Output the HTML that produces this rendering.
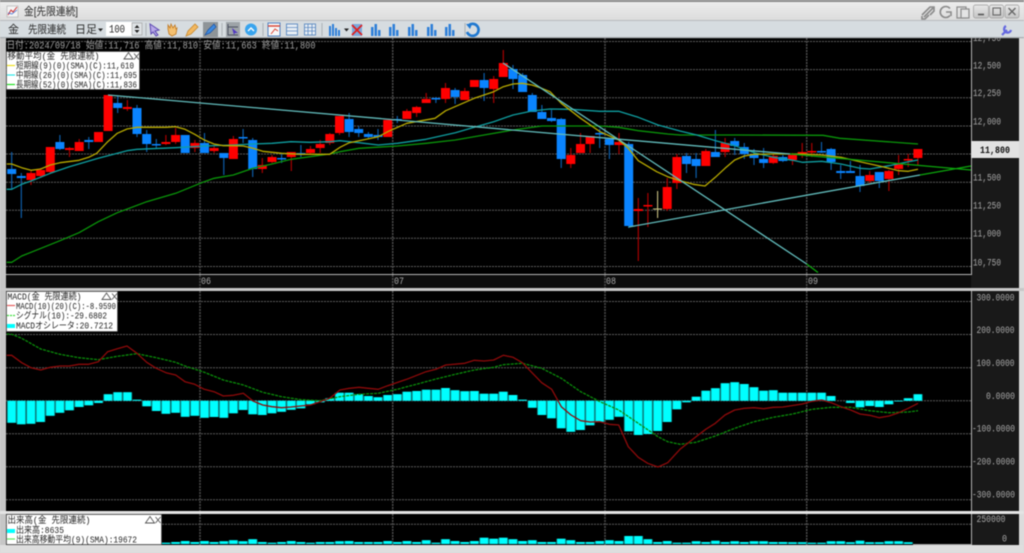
<!DOCTYPE html>
<html lang="ja"><head><meta charset="utf-8"><title>金[先限連続]</title>
<style>
html,body{margin:0;padding:0;width:1024px;height:553px;overflow:hidden;background:#d8d8d8}
svg{display:block;filter:blur(.4px)}
.m{font-family:"Liberation Mono","Noto Sans CJK JP",monospace;font-size:10px}
.s{font-family:"Liberation Sans","Noto Sans CJK JP",sans-serif;font-size:11px;fill:#2a2a2a}
.ax{fill:#a8a8a8}
.lg{fill:#222;font-size:9px}
.g{stroke:#5c5c5c;stroke-width:1;stroke-dasharray:2 1;fill:none}
.v{stroke:#4e4e4e;stroke-width:1.5;stroke-dasharray:2 1;fill:none}
.l{fill:none;stroke-linejoin:round;stroke-width:1.3}
</style></head><body>
<svg xmlns="http://www.w3.org/2000/svg" width="1024" height="553" viewBox="0 0 1024 553">
<defs><linearGradient id="tb" x1="0" y1="0" x2="0" y2="1"><stop offset="0" stop-color="#efefef"/><stop offset="1" stop-color="#dcdcdc"/></linearGradient>
<linearGradient id="bt" x1="0" y1="0" x2="0" y2="1"><stop offset="0" stop-color="#e8e8e8"/><stop offset="1" stop-color="#c4c4c4"/></linearGradient></defs>
<rect width="1024" height="553" fill="#d8d8d8"/>
<rect x="0" y="38" width="6" height="510" fill="#c6c6c6"/>
<rect x="1019" y="38" width="5" height="510" fill="#dcdcdc"/>

<!-- panels -->
<rect x="6" y="38" width="1013" height="250" fill="#000"/>
<rect x="6" y="274" width="965" height="14" fill="#0c0c0c"/>
<rect x="971" y="38" width="48" height="250" fill="#191919"/>
<rect x="6" y="291" width="965" height="220" fill="#000"/>
<rect x="971" y="291" width="48" height="220" fill="#191919"/>
<rect x="6" y="514" width="965" height="31" fill="#000"/>
<rect x="971" y="514" width="48" height="31" fill="#191919"/>
<rect x="0" y="288" width="1024" height="3" fill="#c8c8c8"/>
<rect x="0" y="511" width="1024" height="3" fill="#e4e4e4"/>
<rect x="0" y="545" width="1024" height="8" fill="#dedede"/>
<path d="M6 274.5H971.5V38M971.5 291V511M971.5 514V545" fill="none" stroke="#b4b4b4" stroke-width="1"/>

<!-- grid -->
<path class="g" d="M6 41.5H971M6 69.6H971M6 97.7H971M6 126H971M6 154H971M6 182.3H971M6 210.3H971M6 238.3H971M6 266.5H971"/>
<path class="v" d="M200 38V288M392.7 38V288M605 38V288M806.7 38V288"/>
<path class="g" d="M6 301.5H971M6 334.5H971M6 367.7H971M6 400.7H971M6 433.7H971M6 466.7H971M6 499.7H971"/>
<path class="v" d="M200 291V511M392.7 291V511M605 291V511M806.7 291V511"/>
<path class="g" d="M6 524.3H971"/>
<path class="v" d="M200 514V545M392.7 514V545M605 514V545M806.7 514V545"/>

<!-- candles -->
<path fill="none" stroke="#a80000" stroke-width="1.2" d="M31 171V185M40.6 168V178M50.3 147V174M69.5 147V157M79.2 139V151M98.5 132V142M127.4 100V111M165.9 135V145M175.6 128V144M194.9 140V152M214.1 145V153M233.4 136V159M262.3 158V173M272 155V163M291.3 152V171M310.5 146V154M320.2 140V153M329.8 133V145M339.5 116V135M406.9 109V119M416.6 106V117M426.2 93V103M445.5 83V103M464.8 88V100M474.4 80V87M493.7 76V103M503.3 50V77M570.8 148V168M580.5 133V153M590.1 136V153M619 133V154M638.3 198V261M647.9 193V227M667.2 178V211M676.9 154V189M705.8 149V166M725.1 138V157M773.3 154V164M792.5 153V165M802.2 143V158M811.8 143V157M869.7 171V183M888.9 170V191M898.6 155V175M908.2 154V167M917.9 149V165"/>
<path fill="none" stroke="#0c5ca8" stroke-width="1.2" d="M11.7 152V189M21.3 173V218M59.9 135V150M88.8 137V149M117.7 96V113M137 105V137M146.7 130V152M156.3 139V149M204.5 133V153M223.8 153V175M243.1 129V143M252.7 138V177M281.6 153V163M300.9 145V157M349.1 113V137M358.7 126V137M368.4 132V139M378 129V140M397.3 116V123M435.9 97V103M455.1 88V104M484.1 73V101M513 65V89M522.6 73V92M532.3 93V112M541.9 105V119M551.5 110V122M561.2 118V168M599.7 129V148M609.4 139V159M628.7 142V228M686.5 153V173M696.1 153V178M715.4 130V157M734.7 138V155M744.3 143V159M754 149V165M763.6 148V168M782.9 155V162M821.5 142V153M831.1 148V170M840.7 165V179M850.4 161V173M860 165V192M879.3 172V188"/>
<path fill="none" stroke="#c8c080" stroke-width="1.1" d="M657.6 191V218M653 209H662"/>
<path fill="none" stroke="#f00" stroke-width="9" d="M31 173V180M40.6 170V176M50.3 147V172M69.5 148V150M79.2 142V151M98.5 132V142M108.1 95V131M127.4 107V109M165.9 142V144M175.6 135V142M194.9 143V148M214.1 148V151M233.4 139V159M262.3 165V169M272 157V162M291.3 152V157M310.5 149V153M320.2 144V148M329.8 134V143M339.5 116V133M387.7 120V137M406.9 111V119M416.6 107V113M426.2 99V103M445.5 88V99M464.8 91V100M474.4 80V87M493.7 79V89M503.3 63V77M570.8 155V164M580.5 144V153M590.1 136V144M619 142V145M638.3 209V211M647.9 205V206.5M667.2 187V209M676.9 157V183M705.8 151V166M725.1 143V152M773.3 156V163M792.5 155V160M802.2 152V153.5M811.8 151V152.5M869.7 175V181M888.9 171V179M898.6 164V169M908.2 159V160.5M917.9 149V158"/>
<path fill="none" stroke="#0a84ff" stroke-width="9" d="M11.7 169V174M21.3 176V178M59.9 142V149M88.8 140V142M117.7 103V108M137 108V134M146.7 134V144M156.3 144V145.5M185.2 135V153M204.5 143V153M223.8 153V158M243.1 137V138.5M252.7 140V169M281.6 158V159.5M300.9 153V155M349.1 119V132M358.7 129V133M368.4 134V137M378 135V137M397.3 119V120.5M435.9 98V99.5M455.1 90V97M484.1 80V88M513 69V79M522.6 75V92M532.3 95V112M541.9 112V119M551.5 118V121M561.2 119V159M599.7 133V134.5M609.4 139V145M628.7 144V226M686.5 156V164M696.1 159V166M715.4 152V157M734.7 141V146M744.3 147V154M754 154V158M763.6 159V163M782.9 157V161M821.5 151V152.5M831.1 149V162M840.7 171V173M850.4 171V173M860 176V186M879.3 172V181"/>

<!-- moving averages -->
<polyline class="l" stroke="#0a950a" points="6.7,262.3 11.7,262.3 21.7,256 31,252.3 60,240.7 79,232.7 98.3,221.7 117.3,212.7 146.7,201.7 175.7,193.3 204.3,181.7 214,178.3 233.3,175 253,168.3 272,164 291,159.3 329.7,154 340,151.7 359,148.3 397.3,146 426,143.3 455.3,140 484,135 513,130 541.7,126 600,126 618.7,127.3 638.3,130.7 667.7,134 680,135 738.3,135 823,135.3 840,138.3 918,144"/>
<polyline class="l" stroke="#0f9ea0" points="6.7,189.3 11.7,189.3 21.7,184.3 31,181 50.3,173.3 69.3,166.7 98.3,158.3 127,150.7 137,149.3 175.7,147.7 204.3,146 233.3,145 253,144 272,143.3 291,141.7 310.3,142.3 329.7,141.7 340,140.7 359,142.7 378.3,145 397.3,143.3 426,139.3 455.3,132.7 474.3,127.3 493.7,121.7 513,115 532,111 550,109 571,109.3 600,111.3 618.7,111.3 638.3,117.3 658,125 680,131 696.7,135 715.7,140.7 734.7,145.7 754,152.7 773.3,157.3 792.7,160.3 802.3,162.3 821.7,161.3 841,164 860,168.3 870,169 889,165.7 908.3,161.7 918,160"/>
<polyline class="l" stroke="#b8aa00" points="6.7,164 11.7,164 21.7,167.7 31,170.3 40.7,169 50.3,165 60,162.7 79,160.3 88.7,157.3 96.7,153.3 107.7,141.7 117.3,133.3 127,129 137,127.3 166,127.3 175.7,126.7 185,129.3 194.7,134.3 204.3,140 214,144 223.3,145.7 233.3,145.7 243.3,146 253,148.3 262.7,151.3 281.7,153.3 301,154.3 329.7,154.3 340,147.3 349.3,142.7 378.3,136.7 387.7,131.7 406.7,123.3 435,118.3 445.7,110.7 474.3,98.3 493.7,91.7 503.3,86.7 513,84 522.3,83.3 532,85 541.7,88.3 550,91.7 561.3,103.3 580.7,118.3 600,131.7 618.7,140 628.3,148.3 638.3,160.7 656.7,171.7 667.7,176.7 680,180.7 693.3,184.3 705,186 715.3,177.3 725,168.3 734.7,160 744.3,156 754,154.3 773.3,154 802.3,154 821.7,155 841,157.3 860,161.7 879.3,166 898.7,170.7 908.3,171.3 918,169.3"/>

<!-- trend lines -->
<path class="l" stroke="#62bcbc" d="M108 95L790 154M503 63L806.7 264M628.7 227L920 175"/>
<path class="l" stroke="#0ca50c" d="M790 154L971 170M806.7 264L818 272.5M920 175L971 166"/>

<!-- price axis -->
<g class="m ax">
<text x="973" y="41" textLength="28" lengthAdjust="spacingAndGlyphs">12,750</text>
<text x="973" y="68.500" textLength="28" lengthAdjust="spacingAndGlyphs">12,500</text>
<text x="973" y="96" textLength="28" lengthAdjust="spacingAndGlyphs">12,250</text>
<text x="973" y="124.500" textLength="28" lengthAdjust="spacingAndGlyphs">12,000</text>
<text x="973" y="180.500" textLength="28" lengthAdjust="spacingAndGlyphs">11,500</text>
<text x="973" y="208.500" textLength="28" lengthAdjust="spacingAndGlyphs">11,250</text>
<text x="973" y="236.500" textLength="28" lengthAdjust="spacingAndGlyphs">11,000</text>
<text x="973" y="265.500" textLength="28" lengthAdjust="spacingAndGlyphs">10,750</text>
<text x="201" y="284" textLength="10" lengthAdjust="spacingAndGlyphs">06</text>
<text x="394" y="284" textLength="10" lengthAdjust="spacingAndGlyphs">07</text>
<text x="606" y="284" textLength="10" lengthAdjust="spacingAndGlyphs">08</text>
<text x="808" y="284" textLength="10" lengthAdjust="spacingAndGlyphs">09</text>
</g>
<rect x="971" y="141" width="48" height="17" fill="#e2e2e2"/>
<text class="m" x="980" y="153" font-weight="bold" fill="#111" textLength="30" lengthAdjust="spacingAndGlyphs">11,800</text>

<!-- MACD bars -->
<g stroke="#0b8080" stroke-width="9.6" fill="none"><path id="mb" d="M11.7 400.7V422.7M21.3 400.7V424.3M31 400.7V423.7M40.6 400.7V422M50.3 400.7V415.7M59.9 400.7V412.7M69.5 400.7V410.3M79.2 400.7V407M88.8 400.7V405.3M98.5 400.7V403M108.1 400.7V394.3M117.7 400.7V392.3M127.4 400.7V392.3M137 400.7V399.7M146.7 400.7V406.3M156.3 400.7V411M165.9 400.7V413.7M175.6 400.7V412.7M185.2 400.7V416.7M194.9 400.7V415.7M204.5 400.7V417.7M214.1 400.7V417M223.8 400.7V417.7M233.4 400.7V413.3M243.1 400.7V410M252.7 400.7V414.3M262.3 400.7V415M272 400.7V413.3M281.6 400.7V411.7M291.3 400.7V409.7M300.9 400.7V408.3M310.5 400.7V404.3M320.2 400.7V402.3M329.8 400.7V398.3M339.5 400.7V392.7M349.1 400.7V392.7M358.7 400.7V394M368.4 400.7V396M378 400.7V397.3M387.7 400.7V395M397.3 400.7V394.3M406.9 400.7V391.7M416.6 400.7V391M426.2 400.7V389.7M435.9 400.7V389.7M445.5 400.7V388M455.1 400.7V390.3M464.8 400.7V391.3M474.4 400.7V391M484.1 400.7V393.7M493.7 400.7V393.7M503.3 400.7V391.7M513 400.7V395M522.6 400.7V399.7M532.3 400.7V407.7M541.9 400.7V415M551.5 400.7V418.3M561.2 400.7V428.3M570.8 400.7V431.7M580.5 400.7V430M590.1 400.7V425.3M599.7 400.7V421.7M609.4 400.7V419.7M619 400.7V416.7M628.7 400.7V431.3M638.3 400.7V435M647.9 400.7V434M657.6 400.7V431M667.2 400.7V422M676.9 400.7V409.3M686.5 400.7V402.3M696.1 400.7V396.7M705.8 400.7V390.7M715.4 400.7V388.3M725.1 400.7V383.3M734.7 400.7V382.3M744.3 400.7V384M754 400.7V387.3M763.6 400.7V390.7M773.3 400.7V390.3M782.9 400.7V392.7M792.5 400.7V392.7M802.2 400.7V392.7M811.8 400.7V392.7M821.5 400.7V392.7M831.1 400.7V396M850.4 400.7V403M860 400.7V407.3M869.7 400.7V406M879.3 400.7V407M888.9 400.7V404.3M898.6 400.7V401.5M908.2 400.7V398.3M917.9 400.7V394.3"/></g>
<use href="#mb" stroke="#00ffff" stroke-width="8" fill="none"/>

<polyline class="l" stroke="#0a8c0a" stroke-dasharray="3 1" points="6.7,334 11.7,334.3 21.7,338.3 40.7,349 60,354.3 79,357.7 98.3,359.7 117.3,356.3 137,353.7 156.3,357.7 175.7,362.3 185,366 204.3,372.3 223.3,380 243.3,385 262.7,392.3 281.7,396.7 301,399.7 320,400.7 340,396.7 359,394.3 378.3,393.3 397.3,389.3 416.3,384.3 436,379 455.3,374.3 474.3,370 493.7,367.3 503.3,364.7 522.3,363.3 541.7,368.3 561.3,378.3 580.7,391.7 600,401.7 618.7,410 638.3,423.3 658,436.7 667.7,441.7 680,444.3 696,442.3 715.3,436 734.7,428.3 754,421.7 773.3,417.3 792.7,414 812,409.3 831.3,407.3 850.7,407.3 869.7,410.7 889,412.7 908.3,412 918,410.7"/>
<polyline class="l" stroke="#8e0a0a" points="6.7,355.3 11.7,355.3 21.7,362.7 31,367.7 40.7,370 50.3,367.3 60,366 69.3,366 79,364.3 88.7,364.3 98.3,361.7 107.7,351.7 117.3,348.7 127,346 137,353.3 146.7,362.3 156.3,368.3 166,372.7 175.7,375 185,381.7 194.7,384.3 204.3,389.3 214,391.7 223.3,396 233.3,395.3 243.3,393.3 253,401 262.7,405 272,406.7 281.7,407.7 291,407 310.3,405 320,401.7 329.7,398.3 340,390 349.3,388.3 359,387.3 368.3,388.3 378.3,389.3 387.7,385.7 406.7,379.3 426,371.7 436,369.3 445.7,365 464.7,363.3 474.3,360.3 484,361 493.7,360 503.3,355.3 513,357.3 522.3,362.7 532,372.7 541.7,382.7 551.7,389.3 561.3,406.7 571,415 580.7,420.7 590.3,422 600,421.7 609.3,424.3 618.7,425 628.3,446.7 638.3,457.3 647.7,463.3 658,467 667.7,462.7 680,449.3 696,436.7 705.7,429.3 715.3,423.3 725,415 734.7,410 744.3,408.3 754,407.7 763.7,408.7 773.3,407.3 783,407 802.3,404 812,401.3 821.7,400 831.3,402.7 841,406.7 850.7,410 860,414 869.7,415.3 879.3,417.7 889,416 898.7,412.7 908.3,408.3 918,403.3"/>

<g class="m ax">
<text x="976.500" y="300.500" textLength="38" lengthAdjust="spacingAndGlyphs">300.0000</text>
<text x="976.500" y="333" textLength="38" lengthAdjust="spacingAndGlyphs">200.0000</text>
<text x="976.500" y="366" textLength="38" lengthAdjust="spacingAndGlyphs">100.0000</text>
<text x="986" y="399" textLength="29" lengthAdjust="spacingAndGlyphs">0.0000</text>
<text x="972" y="431.500" textLength="43" lengthAdjust="spacingAndGlyphs">-100.0000</text>
<text x="972" y="464.500" textLength="43" lengthAdjust="spacingAndGlyphs">-200.0000</text>
<text x="972" y="497.500" textLength="43" lengthAdjust="spacingAndGlyphs">-300.0000</text>
<text x="976.500" y="522" textLength="29" lengthAdjust="spacingAndGlyphs">250000</text>
<text x="1002" y="541.500" textLength="5" lengthAdjust="spacingAndGlyphs">0</text>
</g>

<!-- volume -->
<g stroke="#0b8080" stroke-width="9.6" fill="none"><path id="vb" d="M165.9 544V542.7M175.6 544V542M185.2 544V541M194.9 544V542M204.5 544V541M214.1 544V542M223.8 544V541.3M233.4 544V540.3M243.1 544V541.3M252.7 544V539.3M262.3 544V542M272 544V542.7M281.6 544V542M291.3 544V541M300.9 544V542M310.5 544V542.7M320.2 544V542M329.8 544V542M339.5 544V541.3M349.1 544V541M358.7 544V542M368.4 544V542M378 544V542M387.7 544V541M397.3 544V542M406.9 544V541M416.6 544V542M426.2 544V540.3M435.9 544V542.7M445.5 544V539.3M455.1 544V541M464.8 544V542M474.4 544V541M484.1 544V537.7M493.7 544V538.7M503.3 544V537.7M513 544V539.3M522.6 544V541M532.3 544V540.3M541.9 544V542M551.5 544V542M561.2 544V538.7M570.8 544V540.3M580.5 544V542M590.1 544V542M599.7 544V541M609.4 544V540.3M619 544V541M628.7 544V536M638.3 544V536M647.9 544V539.3M657.6 544V542M667.2 544V541M676.9 544V542.7M686.5 544V542.7M696.1 544V541.3M705.8 544V542M715.4 544V540.7M725.1 544V542M734.7 544V541.3M744.3 544V542M754 544V541.3M763.6 544V541.3M773.3 544V542M782.9 544V542M792.5 544V542.3M802.2 544V542.3M811.8 544V542.7M821.5 544V542.7M831.1 544V541.3M840.7 544V541.3M850.4 544V542.3M860 544V540.7M869.7 544V542.3M879.3 544V542.3M888.9 544V541.3M898.6 544V541.3M908.2 544V542.3"/></g>
<use href="#vb" stroke="#00ffff" stroke-width="8" fill="none"/>
<path d="M913 544.5H971" stroke="#a0a0a0" stroke-width="1"/>

<!-- info line -->
<text class="m" x="6.500" y="48.500" fill="#a0a0a0" textLength="309" lengthAdjust="spacingAndGlyphs">日付:2024/09/18 始値:11,716 高値:11,810 安値:11,663 終値:11,800</text>

<!-- legend 1 -->
<rect x="6.500" y="51.500" width="133" height="38" fill="#fff" stroke="#444" stroke-width=".6"/>
<g class="m lg">
<text x="7.500" y="59" textLength="92" lengthAdjust="spacingAndGlyphs">移動平均(金 先限連続)</text>
<text x="16" y="68.700" textLength="118" lengthAdjust="spacingAndGlyphs">短期線(9)(0)(SMA)(C):11,610</text>
<text x="16" y="78" textLength="121" lengthAdjust="spacingAndGlyphs">中期線(26)(0)(SMA)(C):11,695</text>
<text x="16" y="87.700" textLength="121" lengthAdjust="spacingAndGlyphs">長期線(52)(0)(SMA)(C):11,836</text>
</g>
<path d="M7 65.500H15" stroke="#f0e020" stroke-width="1.2"/><path d="M7 75H15" stroke="#30e8e8" stroke-width="1.2"/><path d="M7 84.500H15" stroke="#20e020" stroke-width="1.2"/>
<path d="M124 59L128.500 52.500L133 59Z M134 53.500L139 59.500M139 53.500L134 59.500" fill="none" stroke="#555" stroke-width=".9"/>

<!-- legend 2 -->
<rect x="6.500" y="291.500" width="111" height="40" fill="#fff" stroke="#444" stroke-width=".6"/>
<g class="m lg">
<text x="7.500" y="299.700" textLength="74" lengthAdjust="spacingAndGlyphs">MACD(金 先限連続)</text>
<text x="16" y="309" textLength="100" lengthAdjust="spacingAndGlyphs">MACD(10)(20)(C):-8.9590</text>
<text x="16" y="318.700" textLength="91" lengthAdjust="spacingAndGlyphs">シグナル(10):-29.6802</text>
<text x="16" y="328.700" textLength="97" lengthAdjust="spacingAndGlyphs">MACDオシレータ:20.7212</text>
</g>
<path d="M7 305.500H15" stroke="#e86060" stroke-width="1.2"/><path d="M7 315.500H15" stroke="#40e040" stroke-width="1.2" stroke-dasharray="2 1"/><rect x="7" y="324" width="8" height="4" fill="#00ffff"/>
<path d="M102 299.500L106.500 293L111 299.500Z M112 293.500L117 299.500M117 293.500L112 299.500" fill="none" stroke="#555" stroke-width=".9"/>

<!-- legend 3 -->
<rect x="6.500" y="514.500" width="155" height="30" fill="#fff" stroke="#444" stroke-width=".6"/>
<g class="m lg">
<text x="7.500" y="523" textLength="83" lengthAdjust="spacingAndGlyphs">出来高(金 先限連続)</text>
<text x="16" y="533" textLength="48" lengthAdjust="spacingAndGlyphs">出来高:8635</text>
<text x="16" y="542.300" textLength="121" lengthAdjust="spacingAndGlyphs">出来高移動平均(9)(SMA):19672</text>
</g>
<rect x="7" y="529" width="8" height="4" fill="#00ffff"/><path d="M7 539H15" stroke="#60e860" stroke-width="1.2"/>
<path d="M145.500 523L150 516.500L154.500 523Z M155.500 517L160.500 523M160.500 517L155.500 523" fill="none" stroke="#555" stroke-width=".9"/>

<!-- title bar -->
<rect x="0" y="0" width="1024" height="20" fill="url(#tb)"/>
<rect x="0" y="0" width="1024" height="2" fill="#8c8c8c"/>
<rect x="0" y="20" width="1024" height="18" fill="#d6dce0"/>
<rect x="0" y="20" width="1024" height="1" fill="#b8bcc0"/>
<rect x="0" y="37" width="1024" height="1.200" fill="#a8acb0"/>
<rect x="7" y="6" width="11" height="11" fill="#f4f4f4" stroke="#aaa" stroke-width=".6"/>
<path d="M8 15L11 10L13 12L17 7" fill="none" stroke="#d03030" stroke-width="1"/><path d="M8 13L12 14L17 10" fill="none" stroke="#3060d0" stroke-width=".7"/>
<text class="s" x="24" y="15" textLength="54" lengthAdjust="spacingAndGlyphs">金[先限連続]</text>

<!-- title right icons -->
<g fill="none" stroke="#8a8a8a" stroke-width="1.600">
<path d="M924 17L933 8M926 11L930 7L934 7L934 11L930 15M922 15L926 11M929 15L925 19L922 19L922 16"/>
<path d="M950 8.500A5.500 5.500 0 1 0 950 15.500M946 12H951V16"/>
<rect x="957" y="7" width="9" height="11" stroke-width="1.200"/><rect x="961" y="9" width="8" height="9" fill="#e4e4e4" stroke-width="1.200"/>
</g>
<g stroke="#9a9a9a" stroke-width=".7" fill="url(#bt)">
<rect x="973.500" y="5" width="15" height="13" rx="2"/><rect x="989.500" y="5" width="14" height="13" rx="2"/><rect x="1005" y="5" width="14" height="13" rx="2"/>
</g>
<path d="M978 14.500H984" stroke="#555" stroke-width="1.600"/>
<rect x="993" y="8" width="7.500" height="7" fill="none" stroke="#666" stroke-width="1.100"/>
<path d="M1008.500 8L1015.500 15M1015.500 8L1008.500 15" stroke="#666" stroke-width="1.400"/>

<!-- toolbar text -->
<text class="s" x="8" y="33">金</text>
<text class="s" x="28" y="33" textLength="38" lengthAdjust="spacingAndGlyphs">先限連続</text>
<text class="s" x="75" y="33" textLength="22" lengthAdjust="spacingAndGlyphs">日足</text>
<path d="M98 28.500H103L100.500 31.500Z" fill="#222"/>
<rect x="106" y="22" width="26" height="14" fill="#fff"/>
<text class="m" x="109" y="32.500" fill="#222" textLength="16" lengthAdjust="spacingAndGlyphs" style="font-size:11px">100</text>
<rect x="132" y="23" width="10" height="12" fill="#dfe3e6" stroke="#999" stroke-width=".6"/>
<path d="M134.500 28H139.500L137 25ZM134.500 30H139.500L137 33Z" fill="#222"/>

<!-- toolbar icons -->
<g stroke="#aab0b4" stroke-width="1" fill="none"><path d="M146 23V36M222 23V36M263 23V36M322 23V36M465 23V36"/></g>
<path d="M150 24L159 30L155 31L158 35L156 36L153 32L151 34Z" fill="#b8a8e8" stroke="#5a48b0" stroke-width="1"/>
<path d="M168 29L168 25L170 28L171 24L173 28L175 25L176 29L177 28L176 34L172 36L169 34Z" fill="#f4c070" stroke="#c07820" stroke-width=".8"/>
<path d="M186 36L188 31L195 24L198 27L191 34Z" fill="#f2b860" stroke="#c88a30" stroke-width=".8"/>
<rect x="203" y="22" width="15" height="15" fill="#8e9498"/>
<path d="M205 35L208 30L214 24L216 27L210 33Z" fill="#3e8ae0" stroke="#1a50a0" stroke-width=".7"/>
<rect x="226" y="22" width="14" height="15" fill="#9ea4a8"/>
<path d="M228 24V35H238M228 27H238" fill="none" stroke="#4a5060" stroke-width="1"/><path d="M232 28L238 33H235L234 35Z" fill="#5038c0"/>
<circle cx="251" cy="29.500" r="6" fill="#38a4ee"/><path d="M248 31L251 28L254 31" fill="none" stroke="#fff" stroke-width="1.400"/>
<rect x="268" y="23" width="12" height="13" fill="#f8f8f8" stroke="#5080c0" stroke-width="1"/><path d="M268 26H280" stroke="#d84030" stroke-width="1.400"/><path d="M271 34L275 29L278 31" fill="none" stroke="#d84030" stroke-width="1"/>
<g fill="#e8eef4" stroke="#5a88c0" stroke-width=".9"><rect x="286.500" y="24" width="11" height="11"/><rect x="304.500" y="24" width="11" height="11"/></g>
<path d="M286.500 27.500H297.500M286.500 31H297.500M304.500 27.500H315.500M304.500 31H315.500M308 24V35M312 24V35" stroke="#5a88c0" stroke-width=".8"/>
<g fill="#2e7fd8">
<path d="M329 26h2v10h-2zM332 24h2v12h-2zM335 28h2v8h-2zM338 30h2v6h-2z"/>
<path d="M371 27h2.500v9h-2.500zM374.500 24h2.500v12h-2.500zM378 30h2.500v6h-2.500zM389 27h2.500v9h-2.500zM392.500 24h2.500v12h-2.500zM396 30h2.500v6h-2.500zM408 27h2.500v9h-2.500zM411.500 24h2.500v12h-2.500zM415 30h2.500v6h-2.500zM427 27h2.500v9h-2.500zM430.500 24h2.500v12h-2.500zM434 30h2.500v6h-2.500zM445 27h2.500v9h-2.500zM448.500 24h2.500v12h-2.500zM452 30h2.500v6h-2.500z"/>
</g>
<path d="M344 28.500H349L346.500 31.500Z" fill="#222"/>
<rect x="352" y="24" width="10" height="12" fill="#7aa8dc"/>
<path d="M352 25L362 35M362 25L352 35" stroke="#e02020" stroke-width="1.800"/>
<path d="M469 25A6 6 0 1 1 467 32" fill="none" stroke="#1f78d0" stroke-width="2.600"/><path d="M466 24L472 24L470 29Z" fill="#1f78d0"/>
<path d="M1002 35L1007 30M1006 26A3.500 3.500 0 1 0 1011 30" fill="none" stroke="#6468e0" stroke-width="2.200"/>
</svg>
</body></html>
